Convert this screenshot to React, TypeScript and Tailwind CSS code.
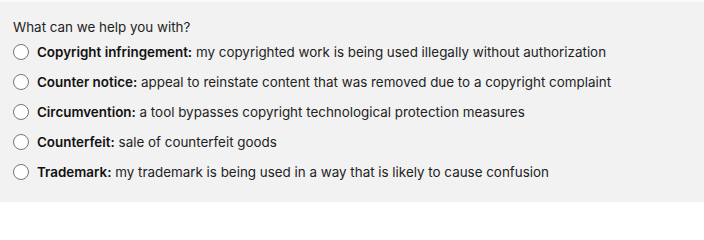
const options = [
  { title: "Copyright infringement:", text: "my copyrighted work is being used illegally without authorization" },
  { title: "Counter notice:", text: "appeal to reinstate content that was removed due to a copyright complaint" },
  { title: "Circumvention:", text: "a tool bypasses copyright technological protection measures" },
  { title: "Counterfeit:", text: "sale of counterfeit goods" },
  { title: "Trademark:", text: "my trademark is being used in a way that is likely to cause confusion" },
];

export default function App() {
  return (
    <div className="h-[202px] w-[704px] border-t-2 border-[#fbfbfb] bg-[#f2f2f2] px-[13px] pt-[15px] font-['Inter',sans-serif] text-[13.4px] text-[#222]">
      <div className="leading-[20px]">What can we help you with?</div>
      <div className="flex flex-col">
        {options.map((o) => (
          <label key={o.title} className="flex h-[30px] items-center gap-[8px]">
            <span className="h-[16px] w-[16px] shrink-0 rounded-full border border-[#767676] bg-white" />
            <span>
              <span className="font-semibold text-[#111]">{o.title}</span> {o.text}
            </span>
          </label>
        ))}
      </div>
    </div>
  );
}
